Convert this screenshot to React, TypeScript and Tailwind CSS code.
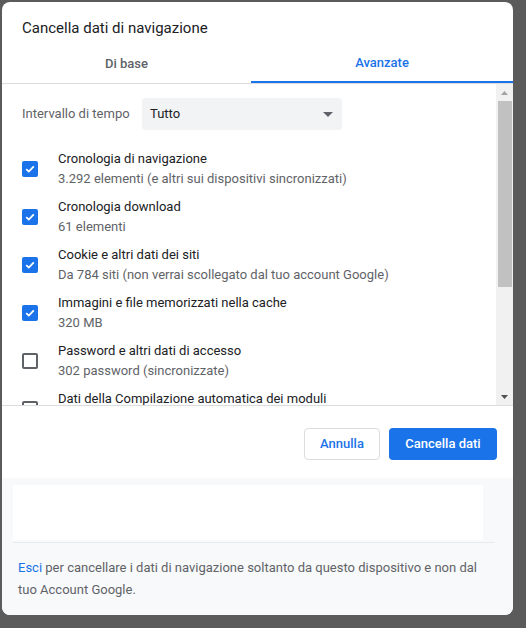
const rows = [
  { title: "Cronologia di navigazione", sub: "3.292 elementi (e altri sui dispositivi sincronizzati)", checked: true },
  { title: "Cronologia download", sub: "61 elementi", checked: true },
  { title: "Cookie e altri dati dei siti", sub: "Da 784 siti (non verrai scollegato dal tuo account Google)", checked: true },
  { title: "Immagini e file memorizzati nella cache", sub: "320 MB", checked: true },
  { title: "Password e altri dati di accesso", sub: "302 password (sincronizzate)", checked: false },
  { title: "Dati della Compilazione automatica dei moduli", sub: "", checked: false },
];

const Checkbox = ({ checked }: { checked: boolean }) =>
  checked ? (
    <div className="w-4 h-4 rounded-[2px] bg-[#1a73e8] flex items-center justify-center">
      <svg width="12" height="12" viewBox="0 0 12 12">
        <path d="M2.2 6.2 L4.8 8.6 L9.8 3.4" fill="none" stroke="white" strokeWidth="1.8" />
      </svg>
    </div>
  ) : (
    <div className="w-4 h-4 rounded-[2px] border-2 border-[#5f6368]" />
  );

const App = () => {
  return (
    <div
      className="w-[526px] h-[628px] bg-[#5b5b5b] pt-[2px] pl-[2px] overflow-hidden"
      style={{ fontFamily: "Roboto, 'Liberation Sans', sans-serif" }}
    >
      <div className="w-[511px] h-[613px] bg-white rounded-[8px] overflow-hidden flex flex-col">
        {/* Titolo */}
        <div className="pt-4 pl-5 h-[42px] text-[15px] leading-5 text-[#202124]">
          Cancella dati di navigazione
        </div>

        {/* Tab */}
        <div className="flex h-[40px] border-b border-[#dadce0]">
          <div className="w-[249px] flex items-center justify-center text-[13px] font-medium text-[#5f6368]">
            Di base
          </div>
          <div className="flex-1 flex items-center justify-center text-[13px] font-medium text-[#1a73e8] border-b-2 border-[#1a73e8]">
            Avanzate
          </div>
        </div>

        {/* Area scorrevole */}
        <div className="flex h-[322px] border-b border-[#dadce0]">
          <div className="flex-1 overflow-hidden pl-5">
            <div className="flex items-start h-[61px] pt-[14px]">
              <span className="text-[13px] leading-8 text-[#5f6368] w-[120px]">Intervallo di tempo</span>
              <div className="w-[200px] h-[32px] rounded-[4px] bg-[#f1f3f4] flex items-center justify-between pl-2 pr-[9px] text-[13px] text-[#202124]">
                <span>Tutto</span>
                <svg width="10" height="5" viewBox="0 0 10 5">
                  <path d="M0 0 L10 0 L5 5 Z" fill="#5f6368" />
                </svg>
              </div>
            </div>
            {rows.map((r) => (
              <div key={r.title} className="flex items-center h-[48px] shrink-0">
                <div className="w-9">
                  <Checkbox checked={r.checked} />
                </div>
                <div className="text-[13px] leading-5">
                  <div className="text-[#202124]">{r.title}</div>
                  <div className="text-[#5f6368]">{r.sub || "\u00a0"}</div>
                </div>
              </div>
            ))}
          </div>
          {/* Barra di scorrimento */}
          <div className="w-[17px] bg-[#f1f1f1] flex flex-col items-center">
            <div className="h-[17px] flex items-center justify-center">
              <svg width="7" height="4" viewBox="0 0 7 4">
                <path d="M0 4 L7 4 L3.5 0 Z" fill="#a3a3a3" />
              </svg>
            </div>
            <div className="w-[14px] h-[186px] bg-[#c1c1c1]" />
            <div className="flex-1" />
            <div className="h-[17px] flex items-center justify-center">
              <svg width="7" height="4" viewBox="0 0 7 4">
                <path d="M0 0 L7 0 L3.5 4 Z" fill="#505050" />
              </svg>
            </div>
          </div>
        </div>

        {/* Pulsanti */}
        <div className="h-[72px] flex items-center justify-end gap-[9px] pr-4 pt-[4px]">
          <button className="h-[32px] w-[76px] rounded-[4px] border border-[#dadce0] bg-white text-[13px] font-medium text-[#1a73e8]">
            Annulla
          </button>
          <button className="h-[32px] w-[108px] rounded-[4px] bg-[#1a73e8] text-[13px] font-medium text-white">
            Cancella dati
          </button>
        </div>

        {/* Piè di pagina */}
        <div className="flex-1 bg-[#f8f9fa] pt-[7px] pl-[11px] pr-4">
          <div className="w-[470px] h-[55px] bg-white" />
          <div className="h-px bg-[#e8eaed] mt-[2px] w-[482px]" />
          <p className="mt-[14px] pl-[5px] text-[13px] leading-[22px] text-[#5f6368]">
            <span className="text-[#1a73e8]">Esci</span> per cancellare i dati di navigazione soltanto da questo dispositivo e non dal tuo Account Google.
          </p>
        </div>
      </div>
    </div>
  );
};

export default App;
